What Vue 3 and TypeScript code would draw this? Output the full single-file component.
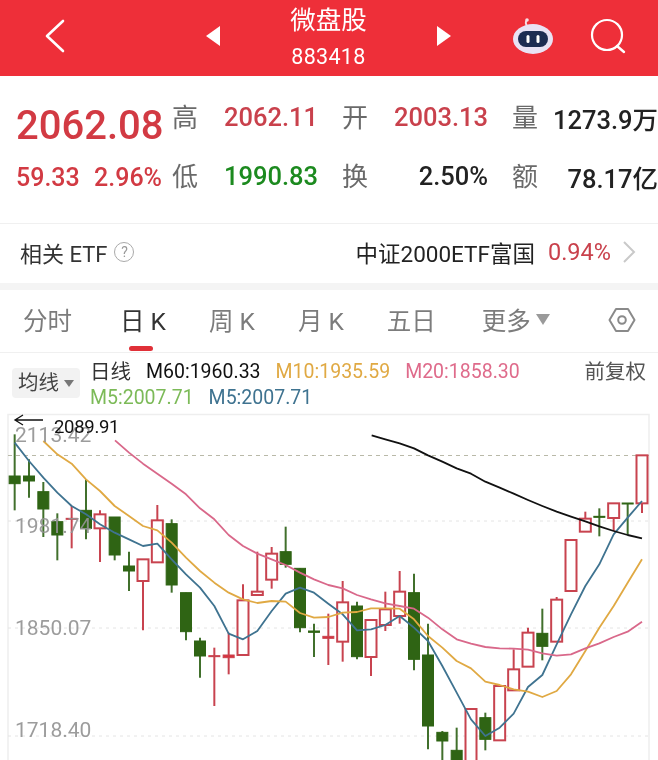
<script setup lang="ts">
// K-line quote page for 微盘股. Chart data was read off at 3x, so the
// candles and lines keep those units and get converted with px/py below.
interface Stat {
  label: string
  value: string
  tone: string
}
interface Tab {
  label: string
  active?: boolean
}
// zx, wick top, wick bottom, body top, body bottom, up?
type Candle = [number, number, number, number, number, boolean]

const stats: Stat[] = [
  { label: '高', value: '2062.11', tone: 'up' },
  { label: '开', value: '2003.13', tone: 'up' },
  { label: '量', value: '1273.9万', tone: 'flat' },
  { label: '低', value: '1990.83', tone: 'down' },
  { label: '换', value: '2.50%', tone: 'flat' },
  { label: '额', value: '78.17亿', tone: 'flat' },
]

const tabs: Tab[] = [
  { label: '分时' },
  { label: '日 K', active: true },
  { label: '周 K' },
  { label: '月 K' },
  { label: '五日' },
]

const px = (z: number) => z / 3
const py = (z: number) => 410 + z / 3

const R = 990 // right half of the chart starts at 330 * 3
const raw: Candle[] = [
  [44, 70, 298, 195, 218, false],
  [87, 145, 260, 195, 210, false],
  [130, 213, 378, 242, 294, false],
  [172, 307, 448, 332, 372, false],
  [215, 285, 412, 322, 325, true],
  [258, 205, 385, 298, 352, false],
  [300, 298, 453, 310, 352, true],
  [344, 318, 448, 318, 432, false],
  [387, 422, 540, 465, 480, false],
  [429, 445, 658, 445, 510, true],
  [472, 282, 455, 328, 454, true],
  [515, 325, 545, 338, 522, false],
  [558, 545, 688, 545, 662, false],
  [600, 680, 800, 690, 735, false],
  [643, 710, 885, 734, 737, true],
  [686, 665, 790, 732, 740, true],
  [729, 520, 733, 568, 732, true],
  [772, 422, 552, 542, 552, true],
  [815, 408, 533, 428, 506, true],
  [857, 347, 470, 422, 460, false],
  [900, 472, 664, 472, 650, false],
  [942, 638, 738, 660, 664, false],
  [985, 608, 762, 676, 682, true],
  [R + 38, 510, 752, 574, 692, true],
  [R + 81, 572, 745, 585, 737, false],
  [R + 123, 627, 795, 627, 738, true],
  [R + 166, 542, 660, 595, 642, true],
  [R + 209, 480, 638, 542, 615, true],
  [R + 252, 488, 778, 545, 745, false],
  [R + 294, 638, 1015, 732, 945, false],
  [R + 337, 960, 1080, 964, 990, false],
  [R + 380, 950, 1080, 1018, 1080, false],
  [R + 423, 894, 1080, 894, 1080, true],
  [R + 466, 905, 1018, 920, 985, false],
  [R + 509, 822, 990, 825, 988, true],
  [R + 551, 715, 838, 775, 838, true],
  [R + 594, 650, 767, 665, 767, true],
  [R + 637, 593, 748, 667, 706, false],
  [R + 680, 558, 692, 566, 692, true],
  [R + 723, 387, 540, 387, 540, true],
  [R + 766, 302, 362, 323, 362, true],
  [R + 808, 292, 376, 316, 319, false],
  [R + 851, 276, 360, 277, 321, true],
  [R + 893, 276, 370, 276, 278, false],
  [R + 936, 133, 306, 133, 277, true],
]

const candles = raw.map(([zx, wt, wb, bt, bb, up]) => ({
  x: px(zx),
  wickTop: py(wt),
  wickBottom: py(wb),
  bodyTop: py(bt),
  bodyHeight: Math.max((bb - bt) / 3, 1),
  up,
  thin: bb - bt < 10,
}))

const left = (pts: number[][]) => pts.map(([x, y]) => `${px(x)},${py(y)}`)
const right = (pts: number[][]) => pts.map(([x, y]) => `${px(x + R)},${py(y)}`)

const lines = [
  {
    color: '#3f7390',
    points: [
      ...left([[44, 95], [87, 150], [130, 200], [172, 245], [215, 285], [258, 310], [300, 340], [344, 365], [387, 385], [429, 405], [472, 398], [515, 445], [558, 490], [600, 530], [643, 585], [686, 668], [729, 685], [772, 660], [815, 600], [857, 548], [900, 530], [942, 545], [985, 578]]),
      ...right([[38, 610], [81, 658], [123, 655], [166, 642], [209, 615], [252, 650], [294, 690], [337, 765], [380, 845], [423, 925], [466, 975], [509, 950], [551, 908], [594, 828], [637, 792], [680, 700], [723, 610], [766, 525], [808, 460], [851, 370], [893, 320], [936, 270]]),
    ].join(' '),
  },
  {
    color: '#e0a943',
    points: [
      ...left([[130, 90], [172, 130], [215, 158], [258, 205], [300, 240], [344, 285], [387, 315], [429, 345], [472, 358], [515, 395], [558, 440], [600, 480], [643, 515], [686, 545], [729, 565], [772, 576], [815, 570], [857, 572], [900, 606], [942, 620], [985, 618]]),
      ...right([[38, 605], [81, 603], [123, 592], [166, 592], [209, 593], [252, 625], [294, 675], [337, 710], [380, 750], [423, 772], [466, 812], [509, 822], [551, 835], [594, 842], [637, 858], [680, 840], [723, 790], [766, 720], [808, 650], [851, 585], [893, 515], [936, 445]]),
    ].join(' '),
  },
  {
    color: '#d9688a',
    points: [
      ...left([[345, 88], [387, 125], [429, 158], [472, 188], [515, 218], [558, 250], [600, 292], [643, 325], [686, 372], [729, 405], [772, 428], [815, 445], [857, 462], [900, 485], [942, 505], [985, 522]]),
      ...right([[38, 532], [81, 552], [123, 565], [166, 577], [209, 585], [252, 593], [294, 620], [337, 655], [380, 685], [423, 698], [466, 708], [509, 712], [551, 713], [594, 716], [637, 727], [680, 734], [723, 730], [766, 712], [808, 697], [851, 678], [893, 662], [936, 632]]),
    ].join(' '),
  },
  {
    color: '#111111',
    points: right([[125, 73], [166, 85], [209, 97], [252, 112], [294, 133], [337, 152], [380, 172], [423, 188], [466, 212], [509, 230], [551, 248], [594, 267], [637, 285], [680, 302], [723, 317], [766, 331], [808, 346], [851, 360], [893, 372], [936, 382]]).join(' '),
  },
]

const grid = [520, 627, 735]
const axis = [
  { y: 441, text: '2113.42' },
  { y: 532, text: '1981.74' },
  { y: 634, text: '1850.07' },
  { y: 736, text: '1718.40' },
]
</script>

<template>
  <div class="page">
    <header class="bar">
      <svg class="back" width="24" height="36" viewBox="0 0 24 36">
        <path d="M20 3 4 18l16 15" fill="none" stroke="#fff" stroke-width="2.6" stroke-linecap="round" stroke-linejoin="round" />
      </svg>
      <div class="switcher">
        <svg width="16" height="22" viewBox="0 0 16 22"><path d="M15 1v20L1 11z" fill="#fff" /></svg>
        <div class="title">
          <div class="name">微盘股</div>
          <div class="code">883418</div>
        </div>
        <svg width="16" height="22" viewBox="0 0 16 22"><path d="M1 1v20l14-10z" fill="#fff" /></svg>
      </div>
      <svg class="robot" width="42" height="38" viewBox="0 0 42 38">
        <path d="M15 9c-1.500-2-1.500-4-.500-5.500" fill="none" stroke="#f6dfe6" stroke-width="1.800" />
        <circle cx="15" cy="3" r="1.800" fill="#f6dfe6" />
        <ellipse cx="21" cy="22" rx="20" ry="15" fill="#e9e2f4" />
        <rect x="6" y="14" width="30" height="16" rx="8" fill="#1d2c52" />
        <rect x="14.500" y="18" width="3" height="8" rx="1.500" fill="#fff" />
        <rect x="24.500" y="18" width="3" height="8" rx="1.500" fill="#fff" />
      </svg>
      <svg class="search" width="36" height="36" viewBox="0 0 36 36">
        <circle cx="17" cy="17" r="15" fill="none" stroke="#fff" stroke-width="2.200" />
        <path d="M27 28l7 6" stroke="#fff" stroke-width="2.400" stroke-linecap="round" />
      </svg>
    </header>

    <section class="quote">
      <div class="price">
        <div class="last">2062.08</div>
        <div class="change"><span>59.33</span><span>2.96%</span></div>
      </div>
      <div class="stats">
        <div v-for="s in stats" :key="s.label" class="stat">
          <span class="stat-label">{{ s.label }}</span>
          <span class="stat-value" :class="s.tone">{{ s.value }}</span>
        </div>
      </div>
    </section>

    <section class="etf">
      <span class="etf-title">相关 ETF</span>
      <span class="help">?</span>
      <span class="etf-name">中证2000ETF富国</span>
      <span class="etf-pct">0.94%</span>
      <svg width="14" height="24" viewBox="0 0 14 24">
        <path d="M2 2l10 10L2 22" fill="none" stroke="#c9c9c9" stroke-width="2" />
      </svg>
    </section>

    <nav class="tabs">
      <div v-for="t in tabs" :key="t.label" class="tab" :class="{ active: t.active }">{{ t.label }}</div>
      <div class="tab more">更多<i class="caret-big"></i></div>
      <svg class="gear" width="28" height="26" viewBox="0 0 28 26">
        <path d="M8 2h12l6.500 11L20 24H8L1.500 13z" fill="none" stroke="#8a8a8a" stroke-width="2" stroke-linejoin="round" />
        <circle cx="14" cy="13" r="3.800" fill="none" stroke="#8a8a8a" stroke-width="2" />
      </svg>
    </nav>

    <section class="legend">
      <div class="ma-btn">均线<i class="caret"></i></div>
      <div class="ma-rows">
        <div class="ma-row">
          <span class="ma-kind">日线</span>
          <span class="m60">M60:1960.33</span>
          <span class="m10">M10:1935.59</span>
          <span class="m20">M20:1858.30</span>
          <span class="adjust">前复权</span>
        </div>
        <div class="ma-row">
          <span class="m5a">M5:2007.71</span>
          <span class="m5b">M5:2007.71</span>
        </div>
      </div>
    </section>

    <svg class="chart" width="658" height="350" viewBox="0 410 658 350">
      <path d="M8 760V413.500H649V760" fill="none" stroke="#eeeeee" stroke-width="1.500" />
      <line x1="8" x2="649" y1="454.500" y2="454.500" stroke="#b9b9a8" stroke-dasharray="4 4" />
      <line v-for="y in grid" :key="y" x1="8" x2="649" :y1="y" :y2="y" stroke="#e4e4e4" stroke-dasharray="3 4" />

      <g v-for="(c, i) in candles" :key="i">
        <line :x1="c.x" :x2="c.x" :y1="c.wickTop" :y2="c.wickBottom" :stroke="c.up ? '#c8434f' : '#41702c'" stroke-width="2" />
        <rect
          v-if="c.up"
          :x="c.x - 5.500"
          :y="c.bodyTop"
          width="11"
          :height="c.bodyHeight"
          :fill="c.thin ? '#d8323e' : '#fff'"
          stroke="#c8434f"
          :stroke-width="c.thin ? 1 : 2"
        />
        <rect v-else :x="c.x - 5.500" :y="c.bodyTop" width="11" :height="c.bodyHeight" fill="#2f6414" stroke="#2f6414" />
      </g>

      <polyline
        v-for="l in lines"
        :key="l.color"
        :points="l.points"
        fill="none"
        :stroke="l.color"
        stroke-width="1.800"
        stroke-linejoin="round"
      />

      <text v-for="a in axis" :key="a.text" class="axis" x="15" :y="a.y">{{ a.text }}</text>
      <path d="M43 419H15m8-5-8 5 8 5" fill="none" stroke="#111" stroke-width="1.300" />
      <text class="peak" x="54" y="432">2089.91</text>
    </svg>
  </div>
</template>

<style scoped>
.page {
  width: 658px;
  height: 760px;
  overflow: hidden;
  background: #fff;
  font-family: Roboto, "Noto Sans CJK SC", sans-serif;
  color: #222;
  filter: blur(0.4px);
}

.bar {
  height: 76px;
  display: flex;
  align-items: center;
  background: #ee2f39;
  color: #fff;
  box-sizing: border-box;
  padding: 0 0 4px 43px;
}
.switcher {
  width: 247px;
  margin-left: 138px;
  display: flex;
  align-items: center;
  justify-content: space-between;
}
.title {
  margin-top: 3px;
  text-align: center;
}
.name {
  font-size: 25.500px;
  line-height: 34px;
}
.code {
  margin-top: 5px;
  font-size: 21.500px;
  line-height: 30px;
  letter-spacing: 0.3px;
}
.robot {
  margin-left: 60px;
}
.search {
  margin-left: 36px;
}

.quote {
  height: 148px;
  box-sizing: border-box;
  border-bottom: 1px solid #f0f0f0;
  padding: 24px 0 0 16px;
  display: flex;
}
.price {
  width: 156px;
  color: #d23a43;
}
.last {
  margin-top: 3px;
  font-size: 40px;
  font-weight: 500;
  line-height: 46px;
}
.change {
  width: 146px;
  display: flex;
  justify-content: space-between;
  font-size: 25px;
  font-weight: 500;
  line-height: 30px;
  margin-top: 14px;
}
.stats {
  display: grid;
  grid-template-columns: repeat(3, 146px);
  align-content: start;
  column-gap: 24px;
  row-gap: 25px;
}
.stat {
  display: flex;
  justify-content: space-between;
  align-items: center;
  height: 34px;
}
.stat-label {
  margin-bottom: 4px;
  font-size: 26px;
  color: #6a6a6a;
}
.stat-value {
  font-size: 25.500px;
  font-weight: 500;
}
.stat-value.up {
  color: #c9414c;
}
.stat-value.down {
  color: #1c8a1f;
}
.stat-value.flat {
  color: #222;
}

.etf {
  height: 59px;
  box-sizing: border-box;
  padding: 0 22px 3px 20px;
  display: flex;
  align-items: center;
  font-size: 22px;
}
.etf-title {
  color: #333;
}
.help {
  width: 18px;
  height: 18px;
  margin-left: 7px;
  border: 1px solid #aaa;
  border-radius: 50%;
  font-size: 14px;
  line-height: 18px;
  text-align: center;
  color: #999;
}
.etf-name {
  margin-left: auto;
  font-size: 22.500px;
  color: #222;
}
.etf-pct {
  margin: 0 11px 0 13px;
  font-size: 23.500px;
  color: #c9414c;
}

.tabs {
  height: 70px;
  box-sizing: border-box;
  border-top: 7px solid #f4f4f4;
  border-bottom: 1px solid #f0f0f0;
  padding: 0 22px 3px 23px;
  display: flex;
  align-items: center;
  gap: 43px;
}
.tab {
  position: relative;
  font-size: 24.500px;
  color: #7c7c7c;
}
.tab.active {
  margin-left: 5px;
  color: #333;
}
.tab.active::after {
  content: "";
  position: absolute;
  left: 50%;
  bottom: -14px;
  width: 24px;
  height: 5px;
  margin-left: -14px;
  border-radius: 3px;
  background: #e03038;
}
.more {
  margin-left: 3px;
  display: flex;
  align-items: center;
}
.caret-big {
  margin-left: 5px;
  border-left: 7px solid transparent;
  border-right: 7px solid transparent;
  border-top: 11px solid #9a9a9a;
}
.gear {
  margin-left: auto;
}

.legend {
  height: 58px;
  box-sizing: border-box;
  padding: 6px 12px 0;
  display: flex;
  gap: 10px;
  font-size: 19.500px;
  line-height: 26px;
}
.ma-btn {
  width: 68px;
  height: 30px;
  margin-top: 9px;
  border-radius: 4px;
  background: #f2f2f2;
  color: #444;
  font-size: 20.500px;
  display: flex;
  align-items: center;
  justify-content: center;
  gap: 5px;
}
.caret {
  border-left: 5px solid transparent;
  border-right: 5px solid transparent;
  border-top: 7px solid #777;
}
.ma-rows {
  flex: 1;
}
.ma-row {
  display: flex;
  gap: 15px;
}
.ma-kind {
  font-size: 20.500px;
  color: #333;
}
.m60 {
  color: #111;
}
.m10 {
  color: #e0a943;
}
.m20 {
  color: #df6b8b;
}
.m5a {
  color: #7cba58;
}
.m5b {
  color: #3f7390;
}
.adjust {
  margin-left: auto;
  font-size: 20.500px;
  color: #555;
}

.chart {
  display: block;
}
.axis {
  font-size: 21px;
  fill: #949494;
  fill-opacity: 0.92;
}
.peak {
  font-size: 18.500px;
  fill: #111;
  letter-spacing: -0.3px;
}
</style>
